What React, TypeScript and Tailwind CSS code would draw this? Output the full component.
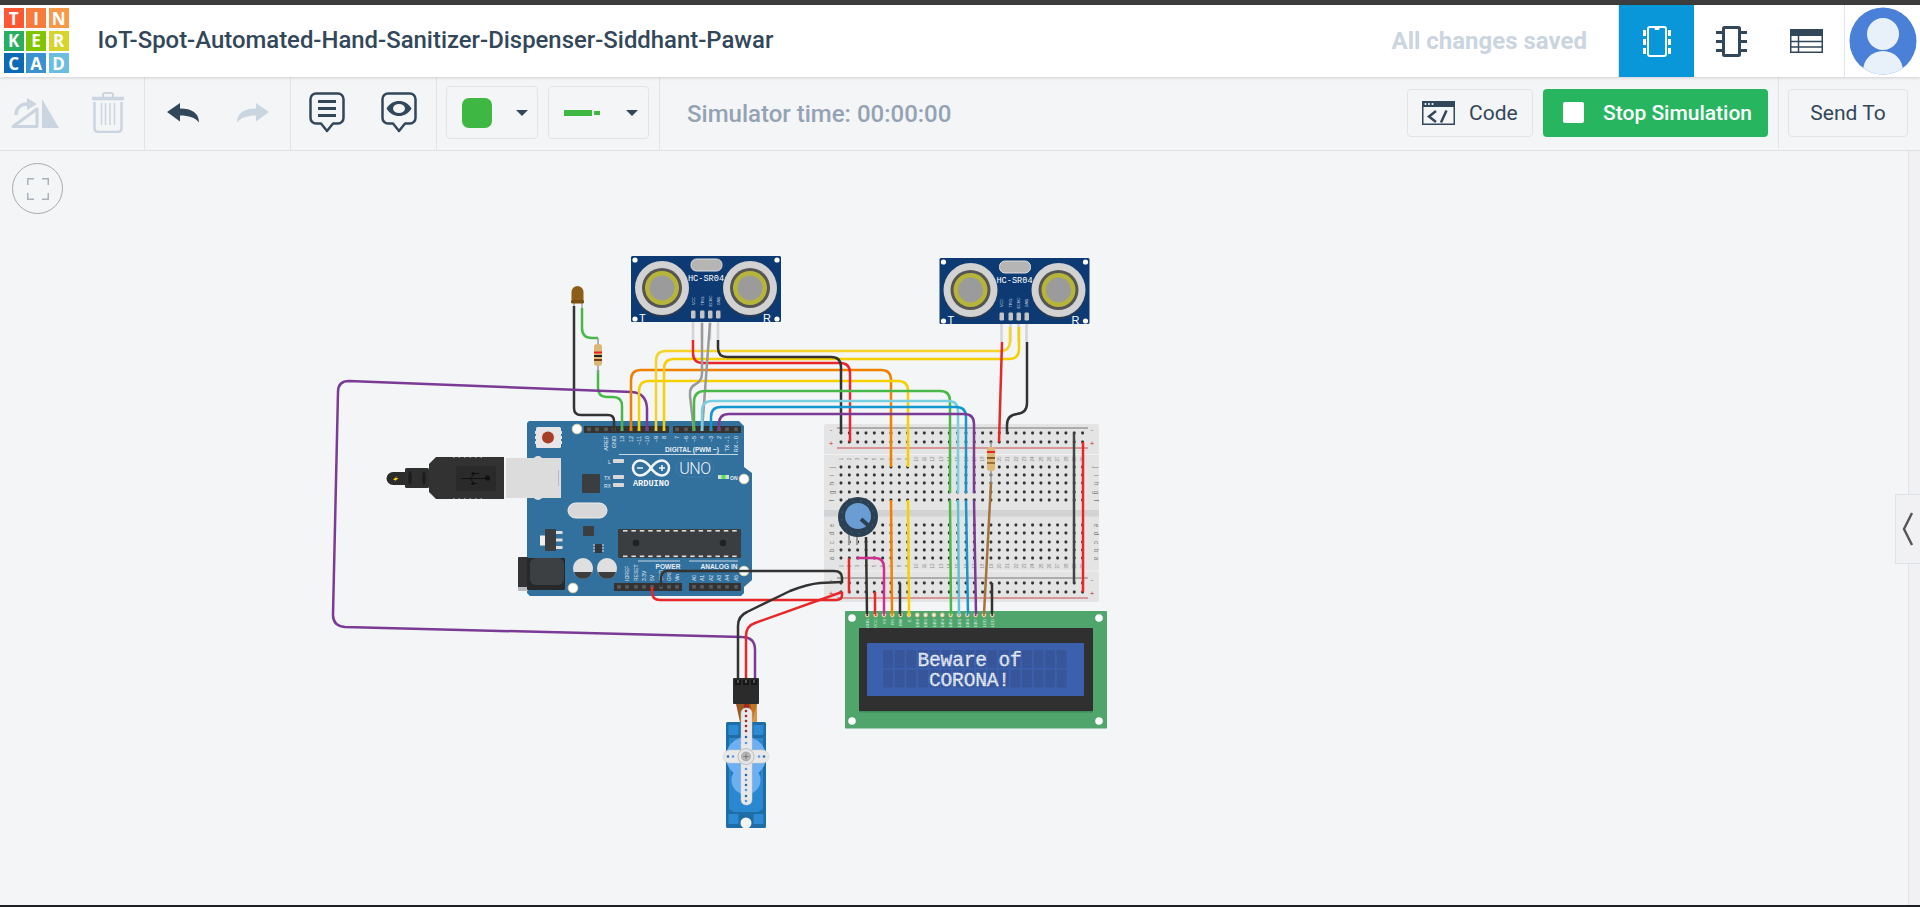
import React from 'react';

const INK = '#33475b';
const MUTED = '#cbd5df';

const logoCells = [
  ['T', 'bg-[#ff5733]'],
  ['I', 'bg-[#f97b3c]'],
  ['N', 'bg-[#f8994a]'],
  ['K', 'bg-[#27ae60]'],
  ['E', 'bg-[#80c600]'],
  ['R', 'bg-[#d6d42e]'],
  ['C', 'bg-[#0a6ab6]'],
  ['A', 'bg-[#3a92d0]'],
  ['D', 'bg-[#6cbde2]'],
];

const Caret = () => (
  <svg width="12" height="6" viewBox="0 0 12 6">
    <path d="M0 0H12L6 6Z" fill={INK} />
  </svg>
);

const FlipIcon = () => (
  <svg width="48" height="30" viewBox="0 0 48 30">
    <path d="M2 28.5L26 11V28.5Z" fill="none" stroke={MUTED} strokeWidth="3" strokeLinejoin="round" />
    <path d="M31 1L48 30H31Z" fill={MUTED} />
    <path d="M5 17C5 10 10 6 17 6" fill="none" stroke={MUTED} strokeWidth="3.5" />
    <path d="M16 0L26 6L16 12Z" fill={MUTED} />
  </svg>
);

const TrashIcon = () => (
  <svg width="32" height="41" viewBox="0 0 32 41">
    <path d="M0 6.5H32" stroke={MUTED} strokeWidth="3.5" />
    <path d="M11 5V2.5C11 1.5 12 1 13 1H19C20 1 21 1.5 21 2.5V5" fill="none" stroke={MUTED} strokeWidth="2" />
    <path d="M2.5 10V36C2.5 38.5 4 40 6.5 40H25.5C28 40 29.5 38.5 29.5 36V10" fill="none" stroke={MUTED} strokeWidth="2.5" />
    <path d="M9.5 11V33M13.5 11V33M18 11V33M22.5 11V33" stroke={MUTED} strokeWidth="1.5" />
  </svg>
);

const Arrow = ({ color, flip }: { color: string; flip?: boolean }) => (
  <svg width="32" height="20" viewBox="0 0 32 20" className={flip ? '-scale-x-100' : ''}>
    <path d="M0 9L13 0V5.5C25 5.5 32 10 32 19.5C28 14.5 22 12.5 13 12.5V18.5Z" fill={color} />
  </svg>
);

const BubbleIcon = ({ eye }: { eye?: boolean }) => (
  <svg width="36" height="41" viewBox="0 0 36 41">
    <path
      d="M7 1.5H29C32 1.5 34.5 4 34.5 7V26C34.5 29 32 31.5 29 31.5H24L18 39L12 31.5H7C4 31.5 1.5 29 1.5 26V7C1.5 4 4 1.5 7 1.5Z"
      fill="none"
      stroke={INK}
      strokeWidth="2.5"
      strokeLinejoin="round"
    />
    {eye ? (
      <>
        <path d="M5.5 16.5C9 11 13 9 18 9C23 9 27 11 30.5 16.5C27 22 23 24 18 24C13 24 9 22 5.5 16.5Z" fill={INK} />
        <ellipse cx="18" cy="16.5" rx="6" ry="4.5" fill="#f4f5f7" />
      </>
    ) : (
      <path d="M9 9.5H27M9 16.5H27M9 23.5H27" stroke={INK} strokeWidth="3" />
    )}
  </svg>
);

const CodeIcon = () => (
  <svg width="33" height="24" viewBox="0 0 33 24">
    <rect x="0.75" y="0.75" width="31.5" height="22.5" fill="none" stroke={INK} strokeWidth="1.5" />
    <rect x="0" y="0" width="33" height="6" fill={INK} />
    <circle cx="3.5" cy="3" r="1" fill="#fff" />
    <circle cx="7" cy="3" r="1" fill="#fff" />
    <circle cx="10.5" cy="3" r="1" fill="#fff" />
    <path d="M14 10L7 15.5L14 21M19 21.5L24.5 9.5" fill="none" stroke={INK} strokeWidth="2.5" />
  </svg>
);

const BoardTabIcon = () => (
  <svg width="28" height="31" viewBox="0 0 28 31">
    <rect x="5" y="1" width="18" height="29" rx="2" fill="none" stroke="#fff" strokeWidth="2" />
    <path d="M11 1H17L16 4H12Z" fill="#fff" />
    <path d="M0 4H3V10H0ZM0 13H3V19H0ZM0 22H3V28H0ZM25 4H28V10H25ZM25 13H28V19H25ZM25 22H28V28H25Z" fill="#fff" />
  </svg>
);

const ChipIcon = () => (
  <svg width="31" height="31" viewBox="0 0 31 31">
    <rect x="7.5" y="1.5" width="16" height="28" rx="1" fill="none" stroke={INK} strokeWidth="3" />
    <path d="M0 5H6V8H0ZM0 14H6V17H0ZM0 23H6V26H0ZM25 5H31V8H25ZM25 14H31V17H25ZM25 23H31V26H25Z" fill={INK} />
  </svg>
);

const TableIcon = () => (
  <svg width="33" height="24" viewBox="0 0 33 24">
    <rect x="0" y="0" width="33" height="7" fill={INK} />
    <rect x="0.75" y="0.75" width="31.5" height="22.5" fill="none" stroke={INK} strokeWidth="1.5" />
    <path d="M0 12.5H33M0 18H33M8.5 7V24" stroke={INK} strokeWidth="1.5" />
  </svg>
);

const Wire = ({ d, c, w = 2.5 }: { d: string; c: string; w?: number }) => (
  <path d={d} fill="none" stroke={c} strokeWidth={w} strokeLinecap="butt" strokeLinejoin="round" />
);

const Label = ({ x, y, t, size = 5.5, fill = '#fff', rot = -90, anchor = 'middle', weight = 400, fam = 'Liberation Sans' }: {
  x: number; y: number; t: string; size?: number; fill?: string; rot?: number; anchor?: 'middle' | 'start' | 'end'; weight?: number; fam?: string;
}) => (
  <text transform={`translate(${x},${y}) rotate(${rot})`} fontSize={size} fill={fill} textAnchor={anchor} fontWeight={weight} fontFamily={`"${fam}", sans-serif`}>
    {t}
  </text>
);

const range = (n: number) => Array.from({ length: n }, (_, i) => i);

const Sensor = ({ dx, dy }: { dx: number; dy: number }) => (
  <g transform={`translate(${dx},${dy})`}>
    <rect x="631" y="256" width="150" height="66" rx="1.5" fill="#0d3a72" />
    {[662, 750].map((cx) => (
      <g key={cx}>
        <circle cx={cx} cy="290" r="27" fill="#2c3a52" />
        <circle cx={cx} cy="288" r="27" fill="#d2d2d2" />
        <circle cx={cx} cy="288" r="20" fill="#555" />
        <circle cx={cx} cy="288" r="17" fill="#b6b53a" />
        <circle cx={cx} cy="288" r="12.5" fill="#9b9b9b" />
      </g>
    ))}
    <rect x="691" y="259" width="31" height="12" rx="5.5" fill="#b5b5b5" stroke="#ddd" />
    <text x="706" y="281" fontSize="8.6" fill="#fff" textAnchor="middle" fontFamily='"Liberation Mono", monospace'>HC-SR04</text>
    {[
      [693, 'VCC'],
      [702, 'TRIG'],
      [710, 'ECHO'],
      [718, 'GND'],
    ].map(([x, t]) => (
      <g key={t as string}>
        <rect x={(x as number) - 2} y="310.5" width="4.5" height="8" rx="1.2" fill="#c4c4c4" />
        <Label x={(x as number) + 1.5} y={301} t={t as string} size={3.8} fill="#cfd8e5" />
      </g>
    ))}
    {[
      [635, 260],
      [777, 260],
      [635, 319],
      [777, 319],
    ].map(([x, y]) => (
      <circle key={`${x}-${y}`} cx={x} cy={y} r="2.6" fill="#fff" />
    ))}
    <text x="639" y="321.5" fontSize="11" fill="#fff" fontFamily='"Liberation Sans", sans-serif'>T</text>
    <text x="763" y="321.5" fontSize="11" fill="#fff" fontFamily='"Liberation Sans", sans-serif'>R</text>
    <path d="M693 322V340M702 322V340M710 322V340M718 322V340" stroke="#d4d4d4" strokeWidth="2.5" />
  </g>
);

const Breadboard = () => {
  const cols = range(30).map((i) => 841 + i * 8.33);
  const rowsMain = [467, 475, 483, 492, 500, 525, 533, 542, 550, 558];
  const rails = [433, 442, 583, 592];
  const letters = ['j', 'i', 'h', 'g', 'f', 'e', 'd', 'c', 'b', 'a'];
  return (
    <g>
      <rect x="824" y="424" width="275" height="178" rx="2" fill="#e4e4e4" />
      <rect x="824" y="510" width="275" height="6.5" fill="#d3d3d3" />
      <path d="M824 454.5H1099M824 571H1099" stroke="#f1f1f1" strokeWidth="1" />
      <path d="M837 428H1088M837 578H1088" stroke="#9a9a9a" strokeWidth="1.6" />
      <path d="M837 448H1088M837 598H1088" stroke="#cf8080" strokeWidth="1.6" />
      {rails.map((y) => cols.map((x) => <rect key={`${x}-${y}`} x={x - 1.4} y={y - 1.4} width="2.8" height="2.8" rx="0.8" fill="#333" />))}
      {rowsMain.map((y) => cols.map((x) => <rect key={`${x}-${y}`} x={x - 1.4} y={y - 1.4} width="2.8" height="2.8" rx="0.8" fill="#333" />))}
      {cols.map((x, i) => (
        <g key={x}>
          <Label x={x + 1.7} y={459} t={`${i + 1}`} size={4.5} fill="#8a8a8a" />
          <Label x={x + 1.7} y={566} t={`${i + 1}`} size={4.5} fill="#8a8a8a" />
        </g>
      ))}
      {letters.map((l, i) => (
        <g key={l}>
          <Label x={834} y={rowsMain[i] + 0.5} t={l} size={6.5} fill="#808080" />
          <Label x={1094} y={rowsMain[i] + 0.5} t={l} size={6.5} fill="#808080" rot={90} />
        </g>
      ))}
      {[
        [831, 432, '-', '#808080'],
        [831, 446, '+', '#c33'],
        [1092, 432, '-', '#808080'],
        [1092, 446, '+', '#c33'],
        [831, 582, '-', '#808080'],
        [831, 596, '+', '#c33'],
        [1092, 582, '-', '#808080'],
        [1092, 596, '+', '#c33'],
      ].map(([x, y, t, c]) => (
        <text key={`${x}-${y}`} x={x as number} y={y as number} fontSize="8" fill={c as string} textAnchor="middle" fontFamily='"Liberation Sans", sans-serif'>{t}</text>
      ))}
    </g>
  );
};

const Arduino = () => {
  const pinsTop = [589, 597, 606, 614, 622, 631, 639, 647, 656, 664, 677, 686, 694, 702, 711, 719, 727, 736];
  const pinsBottom = [619, 627, 636, 644, 652, 661, 669, 677, 694, 702, 711, 719, 727, 736];
  const topLabels = [
    [606, 'AREF'], [614, 'GND'], [622, '13'], [631, '12'], [639, '~11'], [647, '~10'], [656, '~9'], [664, '8'],
    [677, '7'], [686, '~6'], [694, '~5'], [702, '4'], [711, '~3'], [719, '2'], [727, 'TX→1'], [736, 'RX←0'],
  ] as const;
  const bottomLabels = [
    [627, 'IOREF'], [636, 'RESET'], [644, '3.3V'], [652, '5V'], [661, 'GND'], [669, 'GND'], [677, 'Vin'],
    [694, 'A0'], [702, 'A1'], [711, 'A2'], [719, 'A3'], [727, 'A4'], [736, 'A5'],
  ] as const;
  return (
    <g>
      <path d="M529 421H739L744 426V467L752 473V580L744 587V593L741 596H530L527 593V423Z" fill="#32709e" />
      <path d="M584 426H669V433H584ZM673 426H741V433H673ZM614 583H682V591H614ZM689 583H741V591H689Z" fill="#333" />
      {pinsTop.map((x) => <rect key={x} x={x - 1.8} y="427.5" width="3.6" height="3.6" fill="#5a5a5a" />)}
      {pinsBottom.map((x) => <rect key={x} x={x - 1.8} y="585" width="3.6" height="3.6" fill="#5a5a5a" />)}
      <path d="M535 431H537V434H535ZM535 436H537V439H535ZM535 441H537V444H535ZM560 431H562V434H560ZM560 436H562V439H560ZM560 441H562V444H560Z" fill="#e6e6e6" />
      <rect x="536" y="427" width="25" height="21" rx="1.5" fill="#e6e6e6" />
      <circle cx="548" cy="437.5" r="6" fill="#a53f27" />
      {[[577, 429], [744, 479], [744, 571], [573, 588]].map(([x, y]) => (
        <circle key={x} cx={x} cy={y} r="4.8" fill="#fff" stroke="#d9d6a8" strokeWidth="1" />
      ))}
      {topLabels.map(([x, t]) => <Label key={`${x}`} x={x + 2} y={436} t={t} size={5.5} anchor="end" fill="#e3ecf4" />)}
      <text x="692" y="452" fontSize="6.6" fill="#e6eef5" textAnchor="middle" fontWeight="700" fontFamily='"Liberation Sans", sans-serif'>DIGITAL (PWM ~)</text>
      <path d="M619 454.5H738M638 561H680M689 561H738" stroke="#d7e3ee" strokeWidth="0.9" />
      <text x="668" y="568.5" fontSize="6.6" fill="#e6eef5" textAnchor="middle" fontWeight="700" fontFamily='"Liberation Sans", sans-serif'>POWER</text>
      <text x="719" y="568.5" fontSize="6.6" fill="#e6eef5" textAnchor="middle" fontWeight="700" fontFamily='"Liberation Sans", sans-serif'>ANALOG IN</text>
      {bottomLabels.map(([x, t]) => <Label key={`${x}`} x={x + 2} y={581} t={t} size={5} anchor="start" fill="#e3ecf4" />)}
      {/* usb socket */}
      <circle cx="538" cy="461" r="5" fill="#e0e0e0" />
      <circle cx="538" cy="495" r="5" fill="#e0e0e0" />
      <rect x="506" y="458" width="55" height="40" fill="#dcdcdc" />
      <path d="M558.5 470V486" stroke="#bbb" />
      <path d="M429 464L436 457H504V499H436L429 492Z" fill="#323232" />
      <path d="M453 457.5H485M453 498.5H485" stroke="#8a8a8a" strokeWidth="1" strokeDasharray="1.5 4" />
      <rect x="456" y="466" width="40" height="25" fill="#2a2a2a" />
      <path d="M461 478.5H487M470 478.5L475 473.5H479M470 478.5L474 483.5H477" stroke="#111" strokeWidth="1" fill="none" />
      <circle cx="487.5" cy="478" r="2.6" fill="#111" />
      <circle cx="473" cy="473.5" r="1.6" fill="#111" />
      <circle cx="473" cy="483.5" r="1.6" fill="#111" />
      <rect x="405" y="468" width="24" height="20" rx="1.5" fill="#2f2f2f" />
      <ellipse cx="410" cy="478" rx="1.8" ry="7" fill="#1d1d1d" />
      <ellipse cx="424" cy="478" rx="1.8" ry="7" fill="#1d1d1d" />
      <path d="M405 472H393A6.5 6.5 0 0 0 393 485H405Z" fill="#2c2c2c" />
      <path d="M397 476L393 480H395.5L394 482L398.5 478H396Z" fill="#f5d000" />
      {/* chips */}
      <rect x="618" y="529" width="123" height="29" rx="1" fill="#3b3e41" />
      {range(14).map((i) => (
        <g key={i}>
          <rect x={623 + i * 8.4} y="530" width="4.5" height="1.6" fill="#ddd" />
          <rect x={623 + i * 8.4} y="555.5" width="4.5" height="1.6" fill="#ddd" />
        </g>
      ))}
      <circle cx="636" cy="543" r="3.3" fill="#1f2123" />
      <circle cx="723" cy="543" r="3.3" fill="#1f2123" />
      <rect x="582" y="474" width="18" height="19" rx="1" fill="#3b3e41" />
      <rect x="568" y="503" width="39" height="15" rx="7.5" fill="#d8d8d8" stroke="#eee" />
      <rect x="583" y="526" width="11" height="10" rx="1" fill="#3b3e41" />
      <rect x="595" y="544" width="7" height="9" fill="#33363a" />
      <path d="M593 545H595M593 548H595M593 551H595M602 545H604M602 548H604M602 551H604" stroke="#ddd" />
      <rect x="540" y="535.5" width="6" height="10" fill="#f0f0f0" />
      <rect x="545" y="529" width="11" height="22" rx="1" fill="#3b3e41" />
      <path d="M556 532.5H562.5M556 540H562.5M556 547.5H562.5" stroke="#ddd" strokeWidth="3" />
      {/* jack and caps */}
      <rect x="518" y="557" width="10" height="33" rx="1" fill="#333" />
      <rect x="518" y="587" width="10" height="4" fill="#bbb" />
      <rect x="527" y="558" width="38" height="32" rx="1" fill="#26282a" />
      <rect x="530" y="558" width="34" height="27" rx="6" fill="#3d4042" />
      {[583, 607].map((cx) => (
        <g key={cx}>
          <circle cx={cx} cy="569" r="10" fill="#8b9aa8" />
          <circle cx={cx} cy="568" r="10" fill="#dfdfdf" />
          <path d={`M${cx - 9} 572A9.4 9.4 0 0 0 ${cx + 9} 572Z`} fill="#3d3d3d" />
        </g>
      ))}
      {/* leds and logo */}
      {[[613, 459], [613, 475], [613, 483]].map(([x, y]) => <rect key={y} x={x} y={y} width="11" height="4" rx="0.8" fill="#d8d8d8" />)}
      <rect x="718" y="475" width="11" height="4" fill="#cfe3d0" />
      <rect x="721.5" y="475" width="4" height="4" fill="#5ce05c" />
      <text x="609.5" y="463.5" fontSize="5" fill="#e3ecf4" textAnchor="middle" fontFamily='"Liberation Sans", sans-serif'>L</text>
      <text x="604" y="479.5" fontSize="5" fill="#e3ecf4" fontFamily='"Liberation Sans", sans-serif'>TX</text>
      <text x="604" y="487.5" fontSize="5" fill="#e3ecf4" fontFamily='"Liberation Sans", sans-serif'>RX</text>
      <text x="730" y="479.5" fontSize="5" fill="#e3ecf4" fontWeight="700" fontFamily='"Liberation Sans", sans-serif'>ON</text>
      <path d="M651 468C647 462 644 460.5 640 460.5C636 460.5 633 464 633 468C633 472 636 475.5 640 475.5C644 475.5 647 474 651 468C655 462 658 460.5 662 460.5C666 460.5 669 464 669 468C669 472 666 475.5 662 475.5C658 475.5 655 474 651 468Z" fill="none" stroke="#f1f5f8" strokeWidth="2.6" />
      <path d="M637 468H643M659 468H665M662 465V471" stroke="#f1f5f8" strokeWidth="1.6" />
      <text x="651" y="485.5" fontSize="8.6" fill="#f1f5f8" textAnchor="middle" fontWeight="700" fontFamily='"Liberation Mono", monospace'>ARDUINO</text>
      <rect x="676" y="460" width="38" height="17" rx="8.5" fill="none" stroke="#3d7cab" />
      <text x="695" y="474" fontSize="16" fill="#eef4f8" textAnchor="middle" fontWeight="300" fontFamily='"Roboto", sans-serif' letterSpacing="-0.4">UNO</text>
    </g>
  );
};

const Lcd = () => {
  const pinColors = ['#333', '#e33', '#d02f8f', '#f08000', '#333', '#f5d000', '#eee', '#eee', '#eee', '#eee', '#4cb848', '#72c8d8', '#1497d0', '#7b3a96', '#a3743c', '#333'];
  const pinNames = ['GND', 'VCC', 'V0', 'RS', 'RW', 'E', 'DB0', 'DB1', 'DB2', 'DB3', 'DB4', 'DB5', 'DB6', 'DB7', 'LED', 'LED'];
  return (
    <g>
      <rect x="845" y="611" width="262" height="117.5" rx="1" fill="#4fa56c" />
      {[[852, 618], [1099, 618], [852, 721], [1099, 721]].map(([x, y]) => <circle key={`${x}-${y}`} cx={x} cy={y} r="3.8" fill="#fff" />)}
      {pinColors.map((c, i) => (
        <g key={i}>
          <circle cx={867.3 + i * 8.33} cy="615" r="2.4" fill="#e8dfb0" stroke="#8a8a60" strokeWidth="0.4" />
          <circle cx={867.3 + i * 8.33} cy="615" r="1.1" fill={c} />
          <Label x={869 + i * 8.33} y={619} t={pinNames[i]} size={4.2} fill="#dcebe0" anchor="end" />
        </g>
      ))}
      <rect x="859" y="630" width="234" height="82.5" rx="1" fill="#3f8a5a" />
      <rect x="859" y="628" width="234" height="83" rx="1" fill="#303030" />
      <rect x="867" y="643" width="217" height="53" rx="1" fill="#3b60ae" />
      {[650, 669.5].map((y) =>
        range(16).map((i) => <rect key={`${y}-${i}`} x={883.3 + i * 11.56} y={y} width="9.8" height="18" fill="#365496" />),
      )}
      <text x="917.5" y="666" fontSize="19.5" fill="#f2f6fd" stroke="#f2f6fd" strokeWidth="0.35" fontFamily='"Liberation Mono", monospace' letterSpacing="-0.14" xmlSpace="preserve">Beware of</text>
      <text x="929" y="685.5" fontSize="19.5" fill="#f2f6fd" stroke="#f2f6fd" strokeWidth="0.35" fontFamily='"Liberation Mono", monospace' letterSpacing="-0.14">CORONA!</text>
      {/* dot matrix look over the characters */}
      <defs>
        <pattern id="lcdDots" width="2" height="2" patternUnits="userSpaceOnUse">
          <path d="M0 0H2M0 0V2" stroke="#3b60ae" strokeWidth="0.3" />
        </pattern>
      </defs>
      <rect x="883" y="650" width="185" height="38" fill="url(#lcdDots)" />
    </g>
  );
};

const Servo = () => (
  <g>
    <path d="M736 704H744L746 722H740ZM744 704H750V722H744ZM750 704H757L752 722H746Z" fill="#9c5a22" />
    <rect x="744" y="704" width="5" height="18" fill="#a02a1e" />
    <rect x="751" y="704" width="6" height="18" fill="#d07a28" opacity="0.8" />
    <rect x="726" y="722" width="40" height="106" rx="1.5" fill="#1e6da6" />
    <rect x="728.5" y="725" width="10" height="10" rx="1" fill="#2d8ad4" />
    <rect x="753.5" y="725" width="10" height="10" rx="1" fill="#2d8ad4" />
    <rect x="728.5" y="814" width="10" height="10" rx="1" fill="#2d8ad4" />
    <rect x="753.5" y="814" width="10" height="10" rx="1" fill="#2d8ad4" />
    <path d="M729 738H763V809L758 812H734L729 809Z" fill="#2a88d0" />
    <path d="M731 742A27 27 0 0 1 761 742V775A27 27 0 0 1 731 775Z" fill="#2078ba" />
    <circle cx="746" cy="757" r="20" fill="#6cb0f2" />
    <circle cx="746" cy="780" r="14.5" fill="#6cb0f2" />
    <circle cx="746" cy="823" r="5.5" fill="#f4f5f7" />
    <rect x="744" y="823" width="4" height="6" fill="#f4f5f7" />
    <rect x="741" y="708" width="11" height="97" rx="5" fill="#e8e8e8" stroke="#ccc" strokeWidth="0.5" />
    <rect x="723" y="750" width="46" height="13" rx="6.5" fill="#e8e8e8" stroke="#ccc" strokeWidth="0.5" />
    <circle cx="746" cy="756.5" r="8" fill="#e6e6e6" stroke="#aaa" strokeWidth="0.7" />
    <circle cx="746" cy="756.5" r="4.5" fill="#b8b8b8" stroke="#888" strokeWidth="0.5" />
    <path d="M746 753.5V759.5M743 756.5H749" stroke="#666" strokeWidth="0.7" />
    {[711, 716, 721, 726, 731, 737, 743].map((y, i) => <circle key={y} cx="746" cy={y} r="1.3" fill={i < 5 ? '#a02a2a' : i < 6 ? '#2a6da6' : '#5a9ade'} />)}
    {[769, 775, 780, 785, 790, 796, 801].map((y, i) => <circle key={y} cx="746" cy={y} r="1.3" fill={i % 2 ? '#2a6da6' : '#5a9ade'} />)}
    {[728, 733, 759, 764].map((x, i) => <circle key={x} cx={x} cy="756.5" r="1.3" fill={i % 3 ? '#5a9ade' : '#2a6da6'} />)}
    <rect x="733" y="678" width="26" height="26" rx="1" fill="#2b2b2b" />
    <path d="M735 680H741V685H735ZM743 680H749V685H743ZM751 680H757V685H751Z" fill="#161616" />
    <path d="M737 680H739V683H737ZM745 680H747V683H745ZM753 680H755V683H753Z" fill="#555" />
  </g>
);

const Circuit = () => (
  <svg width="1920" height="754" viewBox="0 151 1920 754" className="block">
    <Breadboard />
    <Arduino />
    <Sensor dx={0} dy={0} />
    <Sensor dx={308.5} dy={2} />
    <Lcd />
    <Servo />

    {/* led and its resistor */}
    <path d="M574 300V310M582 300V312" stroke="#bbb" strokeWidth="2" fill="none" />
    <path d="M571.5 303V292A6 6 0 0 1 583.5 292V303Z" fill="#8d5e1b" />
    <rect x="571" y="300" width="13" height="3.5" rx="1.5" fill="#7a5012" />
    <Wire c="#333" d="M574 306V408Q574 415 581 415H608Q614 415 614 421V431" />
    <Wire c="#49b849" d="M582 308V328Q582 338 592 338H598" />
    <Wire c="#49b849" d="M598 370V388Q598 397 607 397H613Q622 397 622 406V431" />
    <path d="M598 338V374" stroke="#999" strokeWidth="1.5" />
    <rect x="594" y="344" width="8" height="22" rx="3" fill="#dcb877" />
    <path d="M594 352.5H602" stroke="#e22" strokeWidth="2" />
    <path d="M594 356H602" stroke="#222" strokeWidth="2" />
    <path d="M594 360H602" stroke="#6e3f1a" strokeWidth="2" />

    {/* arduino digital pins */}
    <Wire c="#7b3a96" d="M755 678V650Q755 637 742 637L345 627Q333 626 333 615L338 392Q338 381 349 381L632 392Q646 393 647 408V431" />
    <Wire c="#f08000" d="M631 431V380Q631 370 641 370H881Q891 370 891 380V467" />
    <Wire c="#f08000" d="M891 500L892 614" />
    <Wire c="#f5d000" d="M639 431V391Q639 381 649 381H898Q908 381 908 391V467" />
    <Wire c="#f5d000" d="M908 500L909 614" />
    <Wire c="#f5d428" d="M656 431V361Q656 351 666 351H1000Q1010 351 1010 341V327" />
    <Wire c="#f5d000" d="M664 431V369Q664 359 674 359H1009Q1019 359 1019 349V327" />
    <Wire c="#e8272b" d="M693 340V353Q693 363 703 363H840Q850 363 850 373V442" />
    <Wire c="#333" d="M718 340V348Q718 357 727 357H831Q841 357 841 367V433" />
    <Wire c="#9a9a9a" d="M702 323V373Q702 381 696 384Q689 387 690 396L694 431" />
    <Wire c="#9a9a9a" d="M710 323L702 431" />
    <Wire c="#49b849" d="M694 431V402Q694 391 705 391H940Q950 391 950 401V493" />
    <Wire c="#49b849" d="M950 500L951 614" />
    <Wire c="#78cfe0" d="M702 431V411Q702 401 712 401H948Q958 401 958 411V493" />
    <Wire c="#5fc3d6" d="M958 500L959 614" />
    <Wire c="#1497d0" d="M711 431V417Q711 407 721 407H956Q966 407 966 417V493" />
    <Wire c="#1497d0" d="M966 500L968 614" />
    <Wire c="#7b3a96" d="M719 431V424Q719 414 729 414H964Q974 414 974 424V493" />
    <Wire c="#7b3a96" d="M974 500L976 614" />

    {/* second sensor */}
    <Wire c="#e8272b" d="M1002 342L999 442" />
    <Wire c="#333" d="M1027 342V403Q1027 413 1017 414Q1007 415 1007 425V434" />

    {/* rails and lower board */}
    <Wire c="#444" d="M1074 433V583" />
    <Wire c="#e8272b" d="M1083 442V592" />
    <path d="M991 442V484" stroke="#999" strokeWidth="1.5" />
    <rect x="987" y="447" width="8" height="24" rx="3" fill="#dcb877" />
    <path d="M987 452H995" stroke="#e22" strokeWidth="2" />
    <path d="M987 458H995" stroke="#8a5a24" strokeWidth="2" />
    <path d="M987 463H995" stroke="#8a5a24" strokeWidth="1.5" />
    <Wire c="#a3743c" d="M991 483L984 614" />
    <Wire c="#333" d="M992 583V614" />

    {/* potentiometer */}
    <path d="M849 535V545M857 535V545" stroke="#999" strokeWidth="2" />
    <circle cx="858" cy="517" r="20" fill="#2c4054" />
    <circle cx="858" cy="517" r="16.5" fill="none" stroke="#4d7da8" strokeWidth="1" strokeDasharray="1 7" />
    <circle cx="858" cy="516" r="13" fill="#6a9dd3" />
    <path d="M861 519L870 527" stroke="#2c4054" strokeWidth="4" />
    <Wire c="#333" d="M866 537L867 614" />
    <Wire c="#e8272b" d="M849 558V593" />
    <Wire c="#d02f8f" d="M857 558H875Q884 558 884 568V614" />
    <Wire c="#e8272b" d="M875 592V614" />
    <Wire c="#333" d="M900 583V614" />

    {/* power and servo */}
    <Wire c="#333" d="M661 587V578Q661 571 668 571H834Q842 571 842 578V583" />
    <Wire c="#e8272b" d="M652 587V592Q652 600 660 600H836Q842 600 842 595V592" />
    <Wire c="#e8272b" d="M842 592L755 623Q746 626 746 636V678" />
    <Wire c="#333" d="M842 582L820 583Q808 584 790 591L747 612Q738 616 738 626V678" />
  </svg>
);

export default function App() {
  return (
    <div className="flex h-[907px] w-[1920px] flex-col overflow-hidden bg-[#f4f5f7] font-['Roboto',sans-serif]">
      <div className="h-[5px] shrink-0 bg-[#3d3d3d]" />

      <header className="relative z-10 flex h-[72px] shrink-0 items-stretch bg-white shadow-[0_1px_3px_rgba(0,0,0,0.15)]">
        <div className="ml-[3.6px] mt-[3px] grid h-[65px] w-[65px] grid-cols-3 grid-rows-3 gap-[2.5px]">
          {logoCells.map(([letter, color]) => (
            <div key={letter} className={`${color} flex items-center justify-center font-['Open_Sans',sans-serif] text-[17px] leading-none font-bold text-white`}>
              {letter}
            </div>
          ))}
        </div>
        <div className="ml-[29px] flex items-center text-[23.9px] font-medium text-[#33475b]">
          IoT-Spot-Automated-Hand-Sanitizer-Dispenser-Siddhant-Pawar
        </div>
        <div className="ml-auto mr-[31px] flex items-center text-[24px] font-bold text-[#cbd5df]">All changes saved</div>
        <div className="flex w-[76px] items-center justify-center border-l border-[#e2e5e8] bg-[#0a97d9]">
          <BoardTabIcon />
        </div>
        <div className="flex w-[75px] items-center justify-center">
          <ChipIcon />
        </div>
        <div className="flex w-[75px] items-center justify-center">
          <TableIcon />
        </div>
        <div className="flex w-[76px] items-center border-l border-[#e2e5e8] pl-[4px]">
          <svg width="68" height="68" viewBox="0 0 68 68">
            <defs>
              <clipPath id="avatarClip">
                <circle cx="34" cy="34" r="33.5" />
              </clipPath>
            </defs>
            <circle cx="34" cy="34" r="33.5" fill="#4a80d8" />
            <g clipPath="url(#avatarClip)" fill="#e8f0fa">
              <circle cx="34" cy="27" r="16" />
              <ellipse cx="34" cy="64" rx="20" ry="20" />
            </g>
          </svg>
        </div>
      </header>

      <div className="flex h-[74px] shrink-0 items-center border-b border-[#dfe2e5]">
        <div className="flex h-full w-[145px] items-center gap-[33px] border-r border-[#e2e5e8] pb-[2px] pl-[11px]">
          <FlipIcon />
          <TrashIcon />
        </div>
        <div className="flex h-full w-[146px] items-center gap-[38px] border-r border-[#e2e5e8] pb-[2px] pl-[22px]">
          <Arrow color={INK} />
          <Arrow color={MUTED} flip />
        </div>
        <div className="flex h-full w-[146px] items-center gap-[36px] border-r border-[#e2e5e8] pb-[2px] pl-[18px]">
          <BubbleIcon />
          <BubbleIcon eye />
        </div>
        <div className="flex h-full w-[223px] items-center gap-[10px] border-r border-[#e2e5e8] pb-[2px] pl-[9px]">
          <div className="flex h-[53px] w-[92px] items-center rounded-[4px] border border-[#e2e5e8] pl-[15px]">
            <span className="h-[30px] w-[30px] rounded-[7px] bg-[#3eb842]" />
            <span className="ml-[24px] flex"><Caret /></span>
          </div>
          <div className="flex h-[53px] w-[101px] items-center rounded-[4px] border border-[#e2e5e8] pl-[15px]">
            <span className="h-[6px] w-[28px] bg-[#3eb842]" />
            <span className="ml-[2px] h-[4px] w-[6px] bg-[#3eb842]" />
            <span className="ml-[26px] flex"><Caret /></span>
          </div>
        </div>
        <div className="ml-[27px] text-[24px] font-medium text-[#94a3b3]">Simulator time: 00:00:00</div>
        <div className="ml-auto flex h-full items-center pb-[2px]">
          <button className="flex h-[48px] w-[126px] items-center rounded-[4px] border border-[#e2e5e8] pl-[14px] text-[21px] text-[#33475b]">
            <CodeIcon />
            <span className="ml-[14px] pt-[2px]">Code</span>
          </button>
          <button className="ml-[10px] flex h-[48px] w-[225px] items-center rounded-[4px] bg-[#27b55f] pl-[20px] text-[21px] font-medium text-white">
            <span className="h-[21px] w-[21px] rounded-[2px] bg-white" />
            <span className="ml-[19px] pt-[2px]">Stop Simulation</span>
          </button>
          <div className="ml-[10px] h-full border-l border-[#e2e5e8]" />
          <button className="ml-[9px] mr-[12px] h-[48px] w-[120px] rounded-[4px] border border-[#e2e5e8] pt-[2px] text-[21px] text-[#33475b]">Send To</button>
        </div>
      </div>

      <main className="relative min-h-0 flex-1">
        <Circuit />
        <div className="absolute left-[12px] top-[12px] flex h-[51px] w-[51px] items-center justify-center rounded-full border border-[#aaa]">
          <svg width="22" height="22" viewBox="0 0 22 22" fill="none" stroke="#aab2ba" strokeWidth="1.5">
            <path d="M0.75 7V0.75H7M15 0.75H21.25V7M21.25 15V21.25H15M7 21.25H0.75V15" />
          </svg>
        </div>
        <div className="absolute bottom-0 right-0 top-0 w-[12px] border-l border-[#e0e3e7] bg-[#f1f1f3]" />
        <div className="absolute right-0 top-[343px] flex h-[70px] w-[25px] items-center justify-center border border-r-0 border-[#dfe2e6] bg-[#f1f1f3]">
          <svg width="12" height="34" viewBox="0 0 12 34" fill="none" stroke="#555" strokeWidth="2.4">
            <path d="M10 1L2 17L10 33" />
          </svg>
        </div>
      </main>

      <div className="h-[2px] shrink-0 bg-[#1c1e22]" />
    </div>
  );
}
